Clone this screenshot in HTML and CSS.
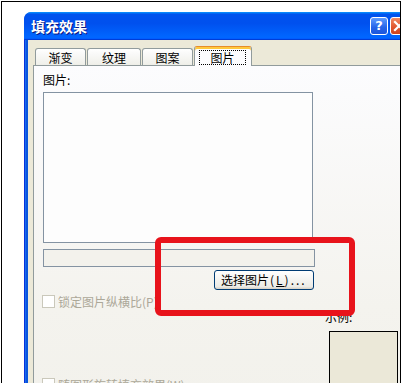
FILE: index.html
```html
<!DOCTYPE html>
<html lang="zh-CN">
<head>
<meta charset="utf-8">
<title>填充效果</title>
<link rel="stylesheet" href="styles.css">
</head>
<body>
<div class="frame">
  <div class="dialog">
    <div class="titlebar">
      <span class="title">填充效果</span>
      <div class="title-buttons">
        <div class="tb-btn help">?</div>
        <div class="tb-btn close">
          <svg width="18" height="18" viewBox="0 0 18 18"><path d="M5 5 L13 13 M13 5 L5 13" stroke="#fff" stroke-width="2.2" stroke-linecap="square"/></svg>
        </div>
      </div>
    </div>
    <div class="dialog-body">
      <div class="tabs">
        <div class="tab t1">渐变</div>
        <div class="tab t2">纹理</div>
        <div class="tab t3">图案</div>
        <div class="tab active"><span class="focus">图片</span></div>
      </div>
      <div class="panel">
        <div class="left">
          <div class="label">图片:</div>
          <div class="picture"></div>
          <div class="field"></div>
          <div class="btn-row"><div class="btn">选择图片<span class="latin">(<u>L</u>)...</span></div></div>
          <div class="check"><span class="box"></span><span class="check-text">锁定图片纵横比(P)</span></div>
          <div class="check second"><span class="box"></span><span class="check-text">随图形旋转填充效果(W)</span></div>
        </div>
        <div class="right">
          <div class="label">示例:</div>
          <div class="sample"></div>
        </div>
      </div>
    </div>
  </div>
  <div class="highlight"></div>
</div>
</body>
</html>
```
FILE: styles.css
```css
html, body {
  margin: 0;
  padding: 0;
  overflow: hidden;
  background: #fff;
}
body {
  font-family: "Noto Sans CJK SC", "Noto Sans", sans-serif;
  font-size: 12px;
  color: #000;
}
.frame {
  position: relative;
  margin: 1px 0 0 1px;
  width: 398px;
  height: 400px;
  border: 1px solid #000;
  border-bottom: none;
  overflow: hidden;
}
.dialog {
  margin: 10px 0 0 22px;
  width: 388px;
  height: 420px;
  background: linear-gradient(to right, #0831d9 0 1px, #166aee 1px 2px, #0855dd 2px);
  border-radius: 8px 8px 0 0;
}
.titlebar {
  height: 28px;
  display: flex;
  align-items: center;
  padding: 0 4px 0 7px;
  border-radius: 7px 7px 0 0;
  background: linear-gradient(to bottom, #0997ff 0%, #0053ee 8%, #0050ee 40%, #0066ff 88%, #0066ff 93%, #005bff 95%, #003dd7 96%, #003dd7 100%);
}
.title {
  color: #fff;
  font-weight: bold;
  font-size: 14px;
  line-height: 16px;
  text-shadow: 1px 1px #0a1883;
}
.title-buttons {
  margin-left: auto;
  display: flex;
  gap: 2px;
}
.tb-btn {
  width: 18px;
  height: 18px;
  box-sizing: border-box;
  border: 1px solid #fff;
  border-radius: 3px;
  display: flex;
  align-items: center;
  justify-content: center;
}
.help {
  background: linear-gradient(to bottom, #5d9bff, #2563e8 60%, #1b56dc);
  color: #fff;
  font-family: "DejaVu Sans", sans-serif;
  font-weight: bold;
  font-size: 13px;
  line-height: 16px;
}
.close {
  background: linear-gradient(to bottom, #f08a63, #e0542c 60%, #cc4420);
}
.close svg {
  display: block;
  margin: -1px;
}
.dialog-body {
  margin: 0 4px;
  height: 392px;
  background: #ece9d8;
  padding: 6px 5px 0 5px;
}
.tabs {
  display: flex;
  align-items: flex-end;
  padding-left: 2px;
}
.tab {
  box-sizing: border-box;
  height: 17px;
  border: 1px solid #919b9c;
  border-bottom: none;
  border-radius: 3px 3px 0 0;
  background: linear-gradient(to bottom, #fff, #fafaf9 26%, #f0f0ea 95%, #ecebe5);
  display: flex;
  align-items: center;
  justify-content: center;
  line-height: 14px;
  padding-top: 1px;
}
.t1 { width: 51px; }
.t2 { width: 54px; margin-left: 1px; }
.t3 { width: 51px; margin-left: 1px; }
.tab.active {
  position: relative;
  width: 58px;
  height: 20px;
  margin-bottom: -1px;
  background: #fcfcfe;
  border-top: 1px solid #e68b2c;
  box-shadow: inset 0 2px #ffc83c;
  align-items: flex-start;
  padding-top: 3px;
  margin-left: 1px;
}
.focus {
  box-sizing: border-box;
  width: 47px;
  height: 15px;
  border: 1px dotted #000;
  display: flex;
  align-items: center;
  justify-content: center;
  margin-right: 1px;
}
.panel {
  border: 1px solid #919b9c;
  background: linear-gradient(to bottom, #fcfcfe, #f4f3ee 60%, #f1f0ea);
  padding-left: 9px;
  height: 400px;
  display: grid;
  grid-template-columns: 272px 1fr;
  column-gap: 10px;
  align-items: start;
}
.label {
  line-height: 14px;
  height: 14px;
}
.left > .label {
  margin-top: 7px;
}
.picture {
  box-sizing: border-box;
  margin-top: 5px;
  height: 151px;
  width: 270px;
  border: 1px solid #8493a2;
  background: #fdfdfd;
}
.field {
  box-sizing: border-box;
  margin-top: 6px;
  height: 18px;
  border: 1px solid #8493a2;
  background: #f3f2ec;
}
.btn-row {
  display: flex;
  justify-content: flex-end;
  margin-top: 3px;
  padding-right: 1px;
}
.btn {
  box-sizing: border-box;
  width: 100px;
  height: 20px;
  border: 1px solid #003c74;
  border-radius: 3px;
  background: linear-gradient(to bottom, #fff, #ecebe6 86%, #d6d0c5);
  display: flex;
  align-items: center;
  padding-left: 6px;
  line-height: 14px;
}
.latin {
  letter-spacing: 2px;
  margin-left: 1px;
}
.check {
  display: flex;
  align-items: center;
  height: 13px;
  margin-top: 5px;
  margin-left: -1px;
  line-height: 13px;
  color: #aca899;
}
.check.second {
  margin-top: 70px;
}
.box {
  box-sizing: border-box;
  width: 13px;
  height: 13px;
  border: 1px solid #cac8bb;
  background: #fff;
  margin-right: 3px;
  flex: none;
}
.check-text {
  white-space: nowrap;
}
.right {
  padding-top: 244px;
}
.sample {
  box-sizing: border-box;
  margin: 7px 0 0 4px;
  width: 69px;
  height: 80px;
  border: 1px solid #000;
  background: #ebe8d8;
}
.highlight {
  position: absolute;
  left: 153px;
  top: 235px;
  width: 200px;
  height: 79px;
  box-sizing: border-box;
  border: 6px solid #e8131b;
  border-radius: 6px;
}
```
